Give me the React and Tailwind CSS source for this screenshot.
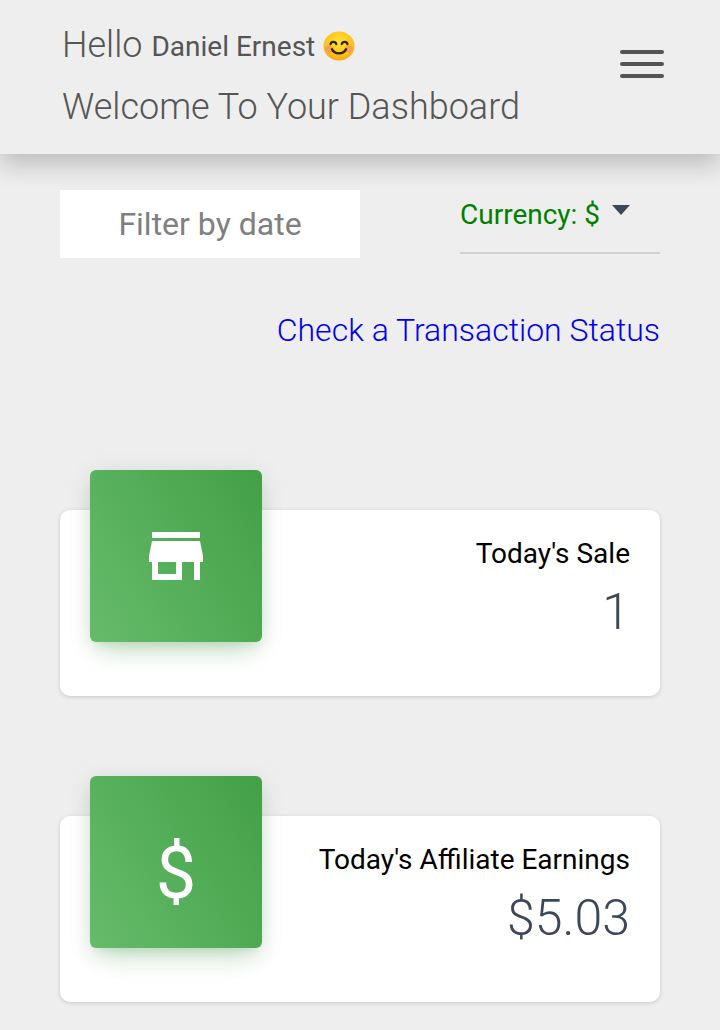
import React from 'react'

const StoreIcon = () => (
  <svg viewBox="0 0 24 24" className="w-[72px] h-[72px] fill-white">
    <path d="M20 4H4v2h16V4zm1 10v-2l-1-5H4l-1 5v2h1v6h10v-6h4v6h2v-6h1zm-9 4H6v-4h6v4z" />
  </svg>
)

const Smile = () => (
  <svg viewBox="0 0 32 32" preserveAspectRatio="none" className="w-8 h-[30px] shrink-0 -ml-px mt-[2px]">
    <defs>
      <radialGradient id="face" cx="50%" cy="35%" r="65%">
        <stop offset="0%" stopColor="#fee133" />
        <stop offset="70%" stopColor="#fcc21b" />
        <stop offset="100%" stopColor="#f5a623" />
      </radialGradient>
    </defs>
    <circle cx="16" cy="16" r="15.5" fill="url(#face)" />
    <circle cx="6" cy="19" r="3.8" fill="#f58a6a" opacity="0.6" />
    <circle cx="26" cy="19" r="3.8" fill="#f58a6a" opacity="0.6" />
    <path d="M7.5 14c.8-3.2 5-3.2 5.8 0M18.7 14c.8-3.2 5-3.2 5.8 0" fill="none" stroke="#2f2310" strokeWidth="2.2" strokeLinecap="round" />
    <path d="M9 19.5c2.5 5.8 11.500 5.800 14 0" fill="none" stroke="#2f2310" strokeWidth="2.4" strokeLinecap="round" />
  </svg>
)

const StatCard = ({ icon, title, value }) => (
  <div className="mx-[60px] h-[186px] bg-white rounded-[10px] shadow-[0_1px_4px_0_rgba(0,0,0,0.16)] flex justify-between">
    <div className="ml-[30px] -mt-10 w-[172px] h-[172px] rounded-md flex items-center justify-center bg-[linear-gradient(60deg,#66bb6a,#43a047)] shadow-[0_16px_26px_-10px_rgba(76,175,80,0.3),0_4px_24px_0_rgba(0,0,0,0.1),0_7px_8px_-5px_rgba(76,175,80,0.15)]">
      {icon}
    </div>
    <div className="pr-[30px] pt-[27px] text-right">
      <p className="text-[28px] leading-[34px] text-black">{title}</p>
      <p className="mt-[11px] text-[50px] leading-[60px] font-light text-[#3c4858]">{value}</p>
    </div>
  </div>
)

const App = () => {
  return (
    <div className="w-[720px] h-[1030px] overflow-hidden bg-[#eeeeee] font-[family-name:Roboto,sans-serif]">
      {/* Header */}
      <header className="h-[154px] pl-[62px] pr-[56px] flex items-center justify-between bg-[#eeeeee] shadow-[0_10px_24px_0_rgba(0,0,0,0.22)] text-[#555555]">
        <div className="-mt-[2px]">
          <div className="h-[62px] flex items-center gap-[9px] whitespace-nowrap">
            <span className="text-[36px] font-light">Hello</span>
            <span className="text-[28px] mt-[4px]">Daniel Ernest</span>
            <Smile />
          </div>
          <div className="h-[62px] flex items-center text-[36px] font-light whitespace-nowrap">Welcome To Your Dashboard</div>
        </div>
        <div className="w-[44px] flex flex-col gap-2 mb-[26px]">
          <span className="h-1 rounded-sm bg-[#555555]" />
          <span className="h-1 rounded-sm bg-[#555555]" />
          <span className="h-1 rounded-sm bg-[#555555]" />
        </div>
      </header>

      {/* Filtros */}
      <div className="mt-9 px-[60px] flex justify-between items-start">
        <div className="w-[300px] h-[68px] bg-white flex items-center justify-center text-[32px] text-[#808080]">
          Filter by date
        </div>
        <div className="w-[200px] h-16 border-b-2 border-[#d2d2d2] flex items-start pt-[7px] text-[28px] leading-9 text-[#008000]">
          <span>Currency: $</span>
          <span className="ml-3 mt-[8px] w-0 h-0 border-x-[9px] border-x-transparent border-t-[10px] border-t-[#3c4858]" />
        </div>
      </div>

      <div className="mt-[52px] px-[60px] text-right text-[32px] leading-10 font-light text-[#0000ee]">
        Check a Transaction Status
      </div>

      {/* Cards */}
      <div className="mt-[160px] flex flex-col gap-[120px]">
        <StatCard icon={<StoreIcon />} title="Today's Sale" value="1" />
        <StatCard
          icon={<span className="mt-[24px] text-[72px] leading-none text-white">$</span>}
          title="Today's Affiliate Earnings"
          value="$5.03"
        />
      </div>
    </div>
  )
}

export default App
